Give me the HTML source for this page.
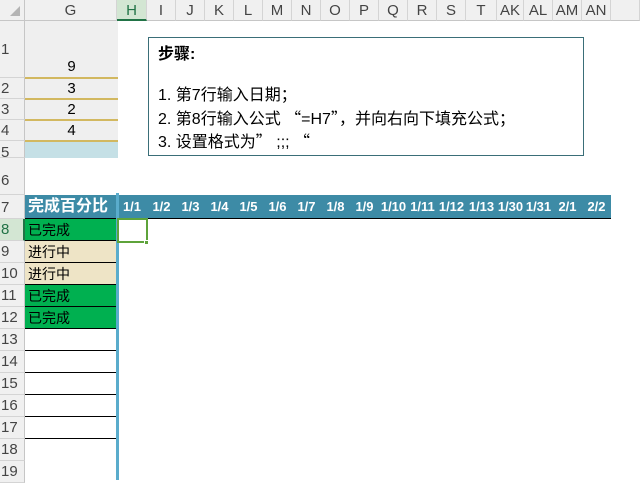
<!DOCTYPE html>
<html><head><meta charset="utf-8">
<style>
*{margin:0;padding:0;box-sizing:border-box}
body{width:640px;height:480px;overflow:hidden;background:#fff;position:relative;font-family:"Liberation Sans","Noto Sans CJK SC",sans-serif}
.a{position:absolute}
.q{font-family:"Noto Sans CJK SC",sans-serif}
.ch{position:absolute;top:0;height:21px;background:#f0f0f0;border-right:1px solid #d4d4d4;border-bottom:1px solid #c6c6c6;color:#444;font-size:15px;text-align:center;line-height:21px}
.rh{position:absolute;left:0;width:25px;background:#f0f0f0;border-bottom:1px solid #d4d4d4;border-right:1px solid #c6c6c6;color:#444;font-size:15px;padding-left:1px}
.d{position:absolute;top:195px;height:23px;color:#fff;font-weight:bold;font-size:13px;text-align:center;line-height:23px;white-space:nowrap}
.g{position:absolute;left:25px;width:92px;font-size:14px;padding-left:3px;border-bottom:1px solid #000}
</style></head><body>
<div class="a" style="left:0;top:0;width:25px;height:21px;background:#f0f0f0;border-right:1px solid #c6c6c6;border-bottom:1px solid #c6c6c6"></div>
<div class="a" style="left:10px;top:6px;width:0;height:0;border-left:10px solid transparent;border-bottom:10px solid #b4b4b4"></div>
<div class="ch" style="left:25px;width:92px">G</div>
<div class="ch" style="left:117px;width:30px;background:#d3e6d3;color:#217346;border-bottom:2px solid #217346">H</div>
<div class="ch" style="left:147px;width:29px">I</div>
<div class="ch" style="left:176px;width:29px">J</div>
<div class="ch" style="left:205px;width:29px">K</div>
<div class="ch" style="left:234px;width:29px">L</div>
<div class="ch" style="left:263px;width:29px">M</div>
<div class="ch" style="left:292px;width:29px">N</div>
<div class="ch" style="left:321px;width:29px">O</div>
<div class="ch" style="left:350px;width:29px">P</div>
<div class="ch" style="left:379px;width:29px">Q</div>
<div class="ch" style="left:408px;width:29px">R</div>
<div class="ch" style="left:437px;width:29px">S</div>
<div class="ch" style="left:466px;width:31px">T</div>
<div class="ch" style="left:497px;width:27px">AK</div>
<div class="ch" style="left:524px;width:29px">AL</div>
<div class="ch" style="left:553px;width:29px">AM</div>
<div class="ch" style="left:582px;width:29px">AN</div>
<div class="ch" style="left:611px;width:29px"></div>
<div class="rh" style="top:21px;height:57px;line-height:57px">1</div>
<div class="rh" style="top:78px;height:21px;line-height:21px">2</div>
<div class="rh" style="top:99px;height:21px;line-height:21px">3</div>
<div class="rh" style="top:120px;height:21px;line-height:21px">4</div>
<div class="rh" style="top:141px;height:17px;line-height:24px">5</div>
<div class="rh" style="top:158px;height:37px;line-height:46px">6</div>
<div class="rh" style="top:195px;height:24px;line-height:26px">7</div>
<div class="rh" style="top:219px;height:22px;line-height:22px;background:#d3e6d3;color:#217346;border-right:2px solid #217346">8</div>
<div class="rh" style="top:241px;height:22px;line-height:22px">9</div>
<div class="rh" style="top:263px;height:22px;line-height:22px">10</div>
<div class="rh" style="top:285px;height:22px;line-height:22px">11</div>
<div class="rh" style="top:307px;height:22px;line-height:22px">12</div>
<div class="rh" style="top:329px;height:22px;line-height:22px">13</div>
<div class="rh" style="top:351px;height:22px;line-height:22px">14</div>
<div class="rh" style="top:373px;height:22px;line-height:22px">15</div>
<div class="rh" style="top:395px;height:22px;line-height:22px">16</div>
<div class="rh" style="top:417px;height:22px;line-height:22px">17</div>
<div class="rh" style="top:439px;height:22px;line-height:22px">18</div>
<div class="rh" style="top:461px;height:22px;line-height:22px">19</div>
<div class="a" style="left:25px;top:21px;width:93px;height:120px;background:#efefef"></div>
<div class="a" style="left:25px;top:56px;width:93px;height:22px;text-align:center;font-size:15px;line-height:22px">9</div>
<div class="a" style="left:25px;top:77px;width:93px;height:2px;background:#d2b860"></div>
<div class="a" style="left:25px;top:78px;width:93px;height:21px;text-align:center;font-size:15px;line-height:22px">3</div>
<div class="a" style="left:25px;top:98px;width:93px;height:2px;background:#d2b860"></div>
<div class="a" style="left:25px;top:99px;width:93px;height:21px;text-align:center;font-size:15px;line-height:22px">2</div>
<div class="a" style="left:25px;top:119px;width:93px;height:2px;background:#d2b860"></div>
<div class="a" style="left:25px;top:120px;width:93px;height:21px;text-align:center;font-size:15px;line-height:22px">4</div>
<div class="a" style="left:25px;top:140px;width:93px;height:2px;background:#d2b860"></div>
<div class="a" style="left:25px;top:142px;width:93px;height:16px;background:#c5e0e6"></div>
<div class="a" style="left:148px;top:37px;width:436px;height:119px;border:1px solid #3a6e78;font-size:16px;color:#000;padding:7px 0 0 9px;line-height:20.5px;white-space:nowrap;overflow:hidden">
<div style="font-weight:bold">步骤:</div><div>&nbsp;</div>
<div>1. 第7行输入日期；</div>
<div>2. 第8行输入公式 <span class="q">“</span>=H7<span class="q">”，</span>并向右向下填充公式；</div>
<div>3. 设置格式为<span class="q">”</span> ;;; <span class="q">“</span></div>
</div>
<div class="a" style="left:25px;top:195px;width:586px;height:23px;background:#3d8ba6"></div>
<div class="a" style="left:25px;top:218px;width:586px;height:1px;background:#000"></div>
<div class="a" style="left:25px;top:195px;width:92px;height:23px;color:#fff;font-weight:bold;font-size:16px;line-height:24px;padding-left:3px">完成百分比</div>
<div class="d" style="left:117px;width:30px">1/1</div>
<div class="d" style="left:147px;width:29px">1/2</div>
<div class="d" style="left:176px;width:29px">1/3</div>
<div class="d" style="left:205px;width:29px">1/4</div>
<div class="d" style="left:234px;width:29px">1/5</div>
<div class="d" style="left:263px;width:29px">1/6</div>
<div class="d" style="left:292px;width:29px">1/7</div>
<div class="d" style="left:321px;width:29px">1/8</div>
<div class="d" style="left:350px;width:29px">1/9</div>
<div class="d" style="left:379px;width:29px">1/10</div>
<div class="d" style="left:408px;width:29px">1/11</div>
<div class="d" style="left:437px;width:29px">1/12</div>
<div class="d" style="left:466px;width:31px">1/13</div>
<div class="d" style="left:497px;width:27px">1/30</div>
<div class="d" style="left:524px;width:29px">1/31</div>
<div class="d" style="left:553px;width:29px">2/1</div>
<div class="d" style="left:582px;width:29px">2/2</div>
<div class="g" style="top:219px;height:22px;background:#00b050;line-height:22px">已完成</div>
<div class="g" style="top:241px;height:22px;background:#eee4c6;line-height:22px">进行中</div>
<div class="g" style="top:263px;height:22px;background:#eee4c6;line-height:22px">进行中</div>
<div class="g" style="top:285px;height:22px;background:#00b050;line-height:22px">已完成</div>
<div class="g" style="top:307px;height:22px;background:#00b050;line-height:22px">已完成</div>
<div class="g" style="top:329px;height:22px"></div>
<div class="g" style="top:351px;height:22px"></div>
<div class="g" style="top:373px;height:22px"></div>
<div class="g" style="top:395px;height:22px"></div>
<div class="g" style="top:417px;height:22px"></div>
<div class="a" style="left:116px;top:193px;width:3px;height:287px;background:#5aaccc"></div>
<div class="a" style="left:117px;top:218px;width:31px;height:25px;border:2px solid #5ea33a"></div>
<div class="a" style="left:144px;top:240px;width:5px;height:5px;background:#5ea33a;border:1px solid #fff"></div>
</body></html>
